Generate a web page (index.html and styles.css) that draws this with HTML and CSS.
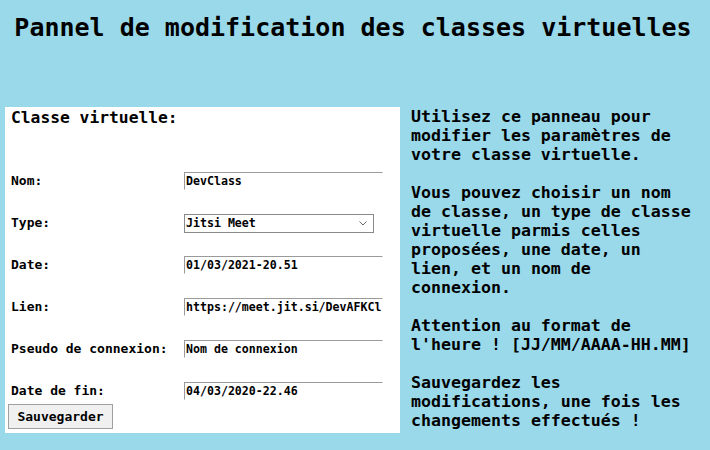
FILE: index.html
```html
<!DOCTYPE html>
<html lang="fr">
<head>
<meta charset="utf-8">
<title>Pannel de modification des classes virtuelles</title>
<link rel="stylesheet" href="styles.css">
</head>
<body>
<h1 class="title">Pannel de modification des classes virtuelles</h1>
<main class="layout">
  <section class="panel">
    <h2 class="panel-title">Classe virtuelle:</h2>
    <form class="form">
      <div class="fields">
        <label class="label" for="nom">Nom:</label>
        <input class="field" id="nom" type="text" value="DevClass">
        <label class="label" for="type">Type:</label>
        <select class="field select" id="type"><option>Jitsi Meet</option></select>
        <label class="label" for="date">Date:</label>
        <input class="field" id="date" type="text" value="01/03/2021-20.51">
        <label class="label" for="lien">Lien:</label>
        <input class="field" id="lien" type="text" value="https://meet.jit.si/DevAFKClass">
        <label class="label" for="pseudo">Pseudo de connexion:</label>
        <input class="field" id="pseudo" type="text" value="Nom de connexion">
        <label class="label" for="fin">Date de fin:</label>
        <input class="field" id="fin" type="text" value="04/03/2020-22.46">
      </div>
      <button class="save" type="button">Sauvegarder</button>
    </form>
  </section>
  <div class="help">
    <p>Utilisez ce panneau pour modifier les paramètres de votre classe virtuelle.</p>
    <p>Vous pouvez choisir un nom de classe, un type de classe virtuelle parmis celles proposées, une date, un lien, et un nom de connexion.</p>
    <p>Attention au format de l'heure ! [JJ/MM/AAAA-HH.MM]</p>
    <p>Sauvegardez les modifications, une fois les changements effectués !</p>
  </div>
</main>
</body>
</html>
```
FILE: styles.css
```css
html, body {
  margin: 0;
}
body {
  background: #99d9ea;
  font-family: "DejaVu Sans Mono", "Liberation Mono", monospace;
  color: #000;
  width: 710px;
  height: 450px;
  overflow: hidden;
}
.title {
  margin: 0;
  padding: 14px 4px 0 0;
  font-size: 25px;
  line-height: 28px;
  text-align: center;
  font-weight: bold;
}
.layout {
  display: flex;
  align-items: flex-start;
  gap: 11px;
  margin-top: 65px;
  padding-left: 5px;
}
.panel {
  width: 395px;
  box-sizing: border-box;
  background: #fff;
  padding: 0 6px 4px;
}
.panel-title {
  margin: 1px 0 0;
  font-size: 16.3px;
  line-height: 20px;
  font-weight: bold;
}
.form {
  margin: 0;
}
.fields {
  display: grid;
  grid-template-columns: 173px 199px;
  grid-auto-rows: 18px;
  row-gap: 24px;
  align-items: center;
  margin-top: 44px;
}
.label {
  font-size: 13px;
  line-height: 18px;
  font-weight: bold;
}
.field {
  box-sizing: border-box;
  width: 199px;
  height: 18px;
  margin: 0;
  padding: 0 1px;
  border: 1px solid;
  border-color: #9a9a9a #fff #fff #9a9a9a;
  border-radius: 0;
  font: bold 11.6px "DejaVu Sans Mono", monospace;
  background: #fff;
  color: #000;
  outline: none;
}
.select {
  width: 190px;
  height: 19px;
  -webkit-appearance: none;
  appearance: none;
  border: 1px solid #8a8a8a;
  background: #fff url("data:image/svg+xml,%3Csvg xmlns='http://www.w3.org/2000/svg' width='8' height='5' viewBox='0 0 8 5'%3E%3Cpolyline points='0.5,0.5 4,4 7.5,0.5' fill='none' stroke='%23666' stroke-width='1'/%3E%3C/svg%3E") no-repeat right 6px center;
}
.save {
  display: block;
  margin: 4px 0 0 -3px;
  width: 105px;
  height: 25px;
  padding: 0;
  background: #f0f0f0;
  border: 1px solid #a0a0a0;
  border-radius: 0;
  font: bold 13px "DejaVu Sans Mono", monospace;
  color: #000;
}
.help {
  width: 286px;
  font-size: 16.6px;
  line-height: 19px;
  font-weight: bold;
}
.help p {
  margin: 0 0 19px;
}
```
